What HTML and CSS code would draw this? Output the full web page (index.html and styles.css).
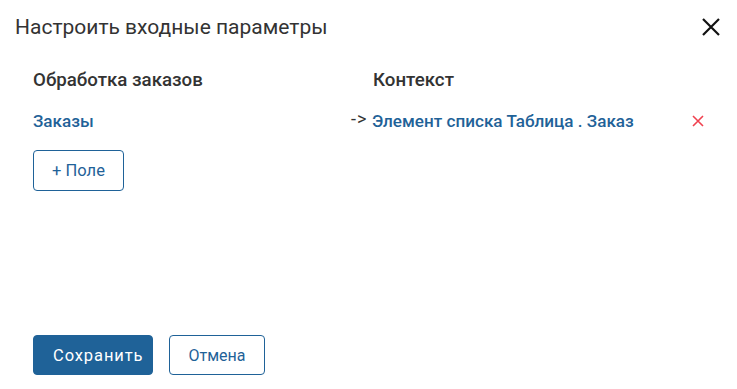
FILE: index.html
```html
<!DOCTYPE html>
<html lang="ru">
<head>
<meta charset="utf-8">
<link rel="stylesheet" href="styles.css">
</head>
<body>
<div class="dialog">
  <div class="header">
    <div class="title">Настроить входные параметры</div>
    <button class="close" aria-label="Закрыть">
      <svg width="20" height="20" viewBox="0 0 20 20"><path d="M2 2 L18 18 M18 2 L2 18" stroke="#111" stroke-width="2.2" fill="none"/></svg>
    </button>
  </div>
  <div class="body">
    <div class="row head-row">
      <div class="col-left">Обработка заказов</div>
      <div class="col-arrow"></div>
      <div class="col-right">Контекст</div>
    </div>
    <div class="row item-row">
      <div class="col-left"><span class="link">Заказы</span></div>
      <div class="col-arrow">-&gt;</div>
      <div class="col-right"><span class="link">Элемент списка Таблица . Заказ</span></div>
      <div class="col-del">
        <svg width="12" height="12" viewBox="0 0 12 12"><path d="M1 1 L11 11 M11 1 L1 11" stroke="#f0414f" stroke-width="1.6" fill="none"/></svg>
      </div>
    </div>
    <button class="btn btn-outline add">+ Поле</button>
  </div>
  <div class="footer">
    <button class="btn btn-primary save">Сохранить</button>
    <button class="btn btn-outline cancel">Отмена</button>
  </div>
</div>
</body>
</html>
```
FILE: styles.css
```css
* { box-sizing: border-box; }
html, body { margin: 0; padding: 0; background: #fff; }
body { font-family: Roboto, "Liberation Sans", Arial, sans-serif; color: #333; }
.dialog { width: 737px; height: 389px; display: flex; flex-direction: column; }
.header { display: flex; justify-content: space-between; align-items: center; padding: 14px 16px 0 15px; height: 40px; }
.title { font-size: 21px; color: #333; line-height: 26px; }
.close { border: 0; background: none; padding: 0; width: 20px; height: 20px; display: flex; }
.body { padding: 29px 33px 0 33px; flex: 1; }
.row { display: flex; align-items: baseline; }
.col-left { width: 319px; }
.col-arrow { width: 21px; font-size: 18px; letter-spacing: 1px; color: #333; position: relative; top: -2px; }
.col-right { width: 321px; }
.col-del { display: flex; align-self: center; }
.head-row { font-size: 18.7px; font-weight: 500; color: #333; line-height: 22px; }
.item-row { margin-top: 19px; font-size: 17.1px; line-height: 22px; }
.link { color: #1f6298; font-weight: 500; }
.btn { font-family: inherit; font-size: 16px; border-radius: 4px; cursor: pointer; height: 40px; }
.btn-outline { background: #fff; border: 1px solid #1f6298; color: #1f6298; }
.btn-primary { background: #1f6298; border: 1px solid #1f6298; color: #fff; }
.add { margin-top: 18px; width: 91px; height: 41px; font-size: 16.5px; }
.footer { display: flex; gap: 16px; padding: 0 33px 14px; }
.save { width: 120px; letter-spacing: 0.9px; font-size: 16.5px; text-align: left; padding: 0 0 0 19px; }
.cancel { width: 96px; }
```
